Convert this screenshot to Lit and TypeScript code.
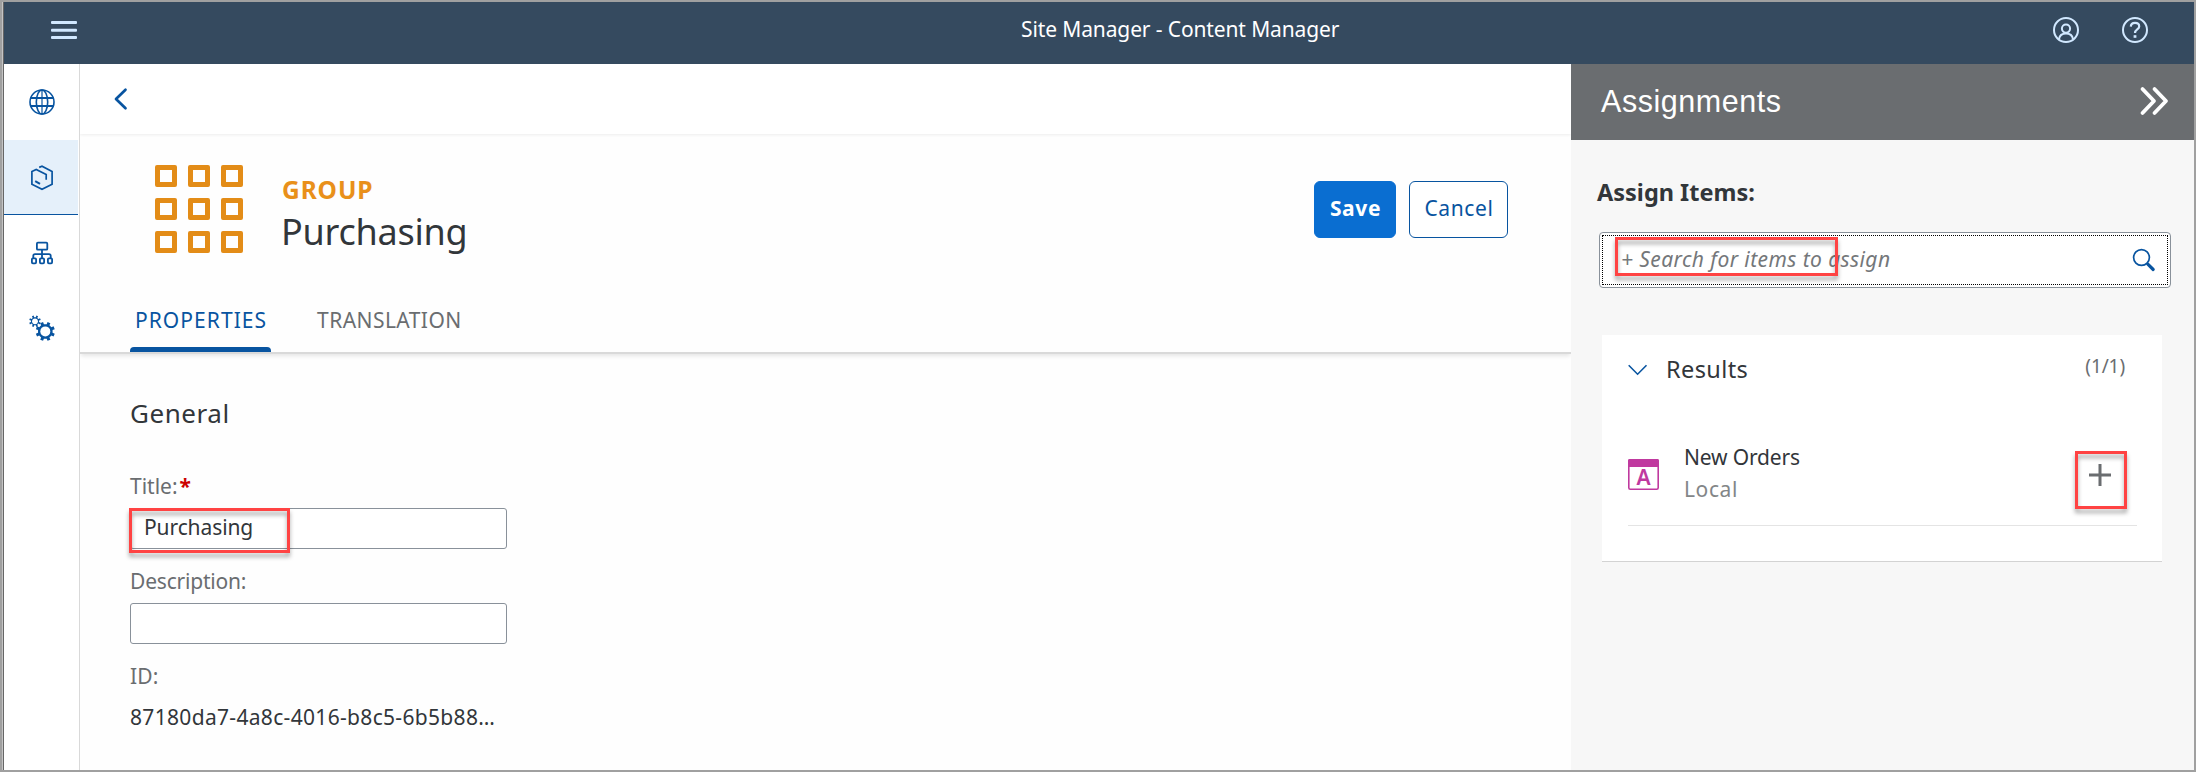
import { LitElement, html, css, svg } from "lit";
import { customElement, property, state } from "lit/decorators.js";
import { classMap } from "lit/directives/class-map.js";

/** Outline of a toothed wheel centred on (cx, cy). */
function gear(cx: number, cy: number, outer: number, root: number, teeth = 8): string {
  const points: string[] = [];
  const step = (Math.PI * 2) / teeth;
  for (let i = 0; i < teeth; i++) {
    const mid = (i + 0.5) * step - Math.PI / 2;
    for (const [r, a] of [
      [root, -0.26],
      [outer, -0.2],
      [outer, 0.2],
      [root, 0.26],
    ]) {
      const angle = mid + a * step;
      points.push(`${(cx + r * Math.cos(angle)).toFixed(2)},${(cy + r * Math.sin(angle)).toFixed(2)}`);
    }
  }
  return points.join(" ");
}

const icons = {
  menu: svg`<svg width="26" height="18" viewBox="0 0 26 18" fill="#d1e8ff">
    <rect width="26" height="3" rx="1"/><rect y="7.7" width="26" height="3" rx="1"/><rect y="15" width="26" height="3" rx="1"/></svg>`,
  user: svg`<svg width="26" height="26" viewBox="0 0 26 26" fill="none" stroke="#d1e8ff" stroke-width="2">
    <circle cx="13" cy="13" r="12"/><circle cx="13" cy="11.6" r="4.1"/>
    <path d="M6 22.2c.6-4 3.3-5.6 7-5.6s6.4 1.6 7 5.6"/></svg>`,
  help: svg`<svg width="26" height="26" viewBox="0 0 26 26" fill="none" stroke="#d1e8ff" stroke-width="2">
    <circle cx="13" cy="13" r="12"/>
    <path stroke-width="2.2" d="M8.800 9.600c.1-2.400 1.800-3.700 4.200-3.700s4.200 1.300 4.200 3.500c0 3.100-4.200 3-4.200 6.600"/>
    <rect x="11.6" y="18.2" width="2.8" height="2.6" fill="#d1e8ff" stroke="none"/></svg>`,
  globe: svg`<svg width="26" height="26" viewBox="0 0 26 26" fill="none" stroke="#0854a0" stroke-width="1.6">
    <circle cx="13" cy="13" r="12"/><ellipse cx="13" cy="13" rx="5.7" ry="12"/>
    <path stroke-width="1.9" d="M1.500 9h23M1.500 17h23"/><path stroke-width="1.2" d="M13 1v24"/></svg>`,
  content: svg`<svg width="26" height="26" viewBox="0 0 26 26" fill="none" stroke="#0854a0" stroke-width="1.7">
    <path d="M10.200 2.400 13 1.300l10.100 5.300v12.600L13 24.300 2.900 19.200V6.600L7.200 4.500l10 5v5.300"/>
    <path stroke-width="2" d="M6.200 16.200 11 18.900"/></svg>`,
  tree: svg`<svg width="24" height="24" viewBox="0 0 24 24" fill="none" stroke="#0854a0" stroke-width="1.8">
    <rect x="6.9" y="1.7" width="10.4" height="7" rx="1"/>
    <path d="M12 8.800V17M3.300 17v-2.200q0-1.700 1.700-1.700h14q1.700 0 1.700 1.700V17"/>
    <rect x="1.9" y="17.3" width="4.2" height="5" rx="1"/><rect x="9.9" y="17.3" width="4.2" height="5" rx="1"/><rect x="17.9" y="17.3" width="4.2" height="5" rx="1"/></svg>`,
  gears: svg`<svg width="26" height="28" viewBox="0 0 26 28" fill="#0854a0">
    <polygon points="${gear(6, 6.3, 5.9, 4.1)}"/><circle cx="6" cy="6.3" r="2.9" fill="#fff"/>
    <polygon points="${gear(16.3, 16.4, 9.7, 7.4)}"/><circle cx="16.3" cy="16.4" r="5" fill="#fff"/></svg>`,
  back: svg`<svg width="14" height="24" viewBox="0 0 14 24" fill="none" stroke="#0854a0" stroke-width="2.7" stroke-linecap="round" stroke-linejoin="round"><path d="M11.500 2.700 2 12 11.500 21.300"/></svg>`,
  forward: svg`<svg width="30" height="30" viewBox="0 0 30 30" fill="none" stroke="#fff" stroke-width="3.8" stroke-linecap="round" stroke-linejoin="round"><path d="M3.500 3 15 15 3.500 27M15.500 3 27 15 15.500 27"/></svg>`,
  search: svg`<svg width="24" height="24" viewBox="0 0 24 24" fill="none" stroke="#0854a0"><circle cx="9.5" cy="9.5" r="7.9" stroke-width="1.7"/><path stroke-width="3.2" stroke-linecap="round" d="M15.800 16.200 21.200 21.500"/></svg>`,
  down: svg`<svg width="20" height="12" viewBox="0 0 20 12" fill="none" stroke="#0854a0" stroke-width="1.6"><path d="M.7 1.300 9.600 10.200 18.500 1.300"/></svg>`,
  plus: svg`<svg width="24" height="24" viewBox="0 0 24 24" fill="none" stroke="#6a6d70" stroke-width="3"><path d="M1 12h22M12 1v22"/></svg>`,
  app: svg`<svg width="31" height="31" viewBox="0 0 31 31"><rect x=".8" y=".8" width="29.4" height="29.4" rx="1.5" fill="#fff" stroke="#c0399f" stroke-width="1.6"/>
    <rect width="31" height="8" rx="1.5" fill="#c0399f"/>
    <text x="15.5" y="26" text-anchor="middle" font-family="Noto Sans, sans-serif" font-size="21" font-weight="600" fill="#c0399f">A</text></svg>`,
};

@customElement("shell-bar")
class ShellBar extends LitElement {
  static styles = css`
    :host { display: grid; grid-template-columns: 970px 1fr auto; align-items: center; height: 62px; padding: 0 46px 0 47px; box-sizing: border-box; background: #354a5f; color: #fff; }
    svg { display: block; }
    .title { font-size: 21px; letter-spacing: -0.12px; line-height: 30px; padding-bottom: 8px; }
    .menu { padding-bottom: 6px; }
    .actions { display: flex; gap: 43px; justify-content: flex-end; padding-bottom: 6px; }
  `;
  @property() heading = "";
  render() {
    return html`<div class="menu">${icons.menu}</div>
      <div class="title">${this.heading}</div>
      <div class="actions">${icons.user}${icons.help}</div>`;
  }
}

@customElement("side-nav")
class SideNav extends LitElement {
  static styles = css`
    :host { display: block; width: 76px; box-sizing: border-box; border-right: 1px solid #d9d9d9; background: #fff; }
    .item { display: flex; align-items: center; justify-content: center; height: 76px; width: 74px; box-sizing: border-box; padding-left: 2px; }
    .item.selected { height: 75px; background: #e5f0fa; border-bottom: 1px solid #0854a0; padding-top: 1px; }
    svg { display: block; }
  `;
  @state() selected = 1;
  render() {
    return [icons.globe, icons.content, icons.tree, icons.gears].map(
      (icon, i) => html`<div class=${classMap({ item: true, selected: i === this.selected })} @click=${() => (this.selected = i)}>${icon}</div>`,
    );
  }
}

@customElement("group-editor")
class GroupEditor extends LitElement {
  static styles = css`
    :host { display: block; background: #fefefe; color: #32363a; font-size: 21px; }
    svg { display: block; }
    .back { height: 70px; box-sizing: border-box; padding: 23px 0 0 34px; box-shadow: 0 1px 3px rgba(0, 0, 0, 0.07); clip-path: inset(0 0 -5px 0); background: #fff; }
    .head { height: 220px; box-sizing: border-box; border-bottom: 2px solid #d9d9d9; box-shadow: 0 3px 4px -1px rgba(0, 0, 0, 0.1); display: flex; flex-direction: column; clip-path: inset(0 0 -8px 0); }
    .summary { display: flex; height: 150px; padding: 31px 63px 0 75px; box-sizing: border-box; }
    .tiles { display: grid; grid-template-columns: repeat(3, 22px); grid-auto-rows: 22px; gap: 11px; }
    .tile { border: 5.5px solid #e38c17; border-radius: 2px; box-sizing: border-box; }
    .names { flex: 1; padding-left: 39px; }
    .kind { color: #e9901a; font-size: 24.5px; font-weight: 700; letter-spacing: 0.9px; line-height: 32px; padding-top: 9px; }
    .name { font-size: 36px; letter-spacing: -0.25px; line-height: 52px; margin: 0 0 0 -1px; }
    .buttons { display: flex; gap: 13px; padding-top: 16px; }
    .button { height: 57px; box-sizing: border-box; border-radius: 6px; border: 1px solid #0854a0; color: #0854a0; letter-spacing: 0.6px; text-align: center; line-height: 53px; width: 99px; padding-left: 1px; background: #fff; }
    .button.primary { width: 82px; background: #0a6ed1; border-color: #0a6ed1; color: #fff; font-weight: 700; }
    .tabs { display: flex; flex: 1; padding-left: 50px; gap: 41px; }
    .tab { padding: 22px 5px 0 5px; height: 70px; box-sizing: border-box; line-height: 32px; color: #6a6d70; letter-spacing: 0.45px; position: relative; }
    .tab.current { color: #0854a0; letter-spacing: 1.05px; width: 141px; }
    .tab.current::after { content: ""; position: absolute; left: 0; bottom: 0; width: 141px; height: 5px; border-radius: 4px 4px 0 0; background: #0854a0; }
    .form { padding: 39px 0 0 50px; width: 377px; }
    h2 { margin: 0 0 33px; font-size: 26px; font-weight: 400; letter-spacing: 0.55px; line-height: 40px; }
    label { display: block; line-height: 40px; height: 42px; color: #6a6d70; }
    .desc { letter-spacing: -0.2px; }
    .id { letter-spacing: 0.2px; }
    .required { color: #c00; font-weight: 700; padding-left: 2px; }
    .field { position: relative; height: 41px; box-sizing: border-box; border: 1px solid #89919a; border-radius: 3px; background: #fff; line-height: 36px; letter-spacing: -0.1px; padding-left: 13px; margin-bottom: 12px; }
    .mark { position: absolute; left: -2px; top: -1px; width: 161px; height: 45px; box-sizing: border-box; border: 3px solid #ff4343; filter: drop-shadow(0 4px 2px rgba(0, 0, 0, 0.35)); }
    .value { line-height: 38px; letter-spacing: 0.32px; white-space: nowrap; }
  `;
  @state() tab = 0;
  render() {
    return html`
      <div class="back">${icons.back}</div>
      <div class="head">
        <div class="summary">
          <div class="tiles">${Array.from({ length: 9 }, () => html`<div class="tile"></div>`)}</div>
          <div class="names"><div class="kind">GROUP</div><div class="name">Purchasing</div></div>
          <div class="buttons"><div class="button primary">Save</div><div class="button">Cancel</div></div>
        </div>
        <div class="tabs">
          ${["PROPERTIES", "TRANSLATION"].map(
            (name, i) => html`<div class=${classMap({ tab: true, current: i === this.tab })}>${name}</div>`,
          )}
        </div>
      </div>
      <div class="form">
        <h2>General</h2>
        <label>Title:<span class="required">*</span></label>
        <div class="field">Purchasing<div class="mark"></div></div>
        <label class="desc">Description:</label>
        <div class="field"></div>
        <label class="id">ID:</label>
        <div class="value">87180da7-4a8c-4016-b8c5-6b5b88…</div>
      </div>`;
  }
}

@customElement("assignment-panel")
class AssignmentPanel extends LitElement {
  static styles = css`
    :host { display: block; background: #f7f7f7; color: #32363a; font-size: 21px; }
    svg { display: block; }
    .bar { display: flex; align-items: center; justify-content: space-between; height: 76px; box-sizing: border-box; padding: 0 25px 2px 30px; background: #6a6d70; color: #fff; }
    .bar-title { font-family: "Liberation Sans", Arial, sans-serif; font-size: 30.5px; letter-spacing: 0.55px; line-height: 40px; padding-bottom: 1px; }
    .body { padding: 32px 23px 0 28px; }
    h3 { margin: 0 0 20px -2px; font-size: 23.5px; line-height: 40px; }
    .search { position: relative; height: 56px; box-sizing: border-box; border: 1px solid #89919a; border-radius: 4px; background: #fff; padding: 2px; }
    .focus { display: flex; justify-content: space-between; align-items: center; height: 50px; box-sizing: border-box; border: 1px dotted #000; padding: 0 11px 0 18px; }
    .hint { font-style: italic; color: #74777a; letter-spacing: 0.42px; line-height: 40px; padding-bottom: 2px; }
    .search-mark { position: absolute; left: 15px; top: 4px; width: 223px; height: 39px; box-sizing: border-box; border: 3px solid #ff4343; filter: drop-shadow(0 4px 2px rgba(0, 0, 0, 0.35)); }
    .card { margin: 47px 9px 0 3px; height: 227px; box-sizing: border-box; background: #fff; border-bottom: 1px solid #d3d3d3; padding: 14px 25px 0 26px; }
    .results { display: flex; align-items: center; height: 42px; }
    .results-title { font-size: 23.5px; letter-spacing: 0.4px; padding: 0 0 2px 18px; flex: 1; line-height: 40px; }
    .count { font-size: 19px; letter-spacing: -0.1px; color: #6a6d70; padding: 0 12px 9px 0; }
    .row { display: flex; align-items: center; height: 101px; margin-top: 34px; box-sizing: border-box; border-bottom: 1px solid #e4e4e4; padding-bottom: 1px; }
    .texts { flex: 1; padding: 0 0 3px 25px; line-height: 32px; }
    .name { letter-spacing: -0.15px; }
    .origin { color: #838688; letter-spacing: 0.6px; }
    .add { position: relative; margin-right: 25px; }
    .add-mark { position: absolute; left: -13px; top: -12px; width: 52px; height: 58px; box-sizing: border-box; border: 3px solid #ff4343; filter: drop-shadow(0 4px 2px rgba(0, 0, 0, 0.35)); }
  `;
  render() {
    return html`
      <div class="bar"><div class="bar-title">Assignments</div>${icons.forward}</div>
      <div class="body">
        <h3>Assign Items:</h3>
        <div class="search">
          <div class="focus"><span class="hint">+ Search for items to assign</span>${icons.search}</div>
          <div class="search-mark"></div>
        </div>
        <div class="card">
          <div class="results">${icons.down}<div class="results-title">Results</div><div class="count">(1/1)</div></div>
          <div class="row">
            ${icons.app}
            <div class="texts"><div class="name">New Orders</div><div class="origin">Local</div></div>
            <div class="add">${icons.plus}<div class="add-mark"></div></div>
          </div>
        </div>
      </div>`;
  }
}

@customElement("app-root")
class AppRoot extends LitElement {
  static styles = css`
    :host { display: block; box-sizing: border-box; width: 2196px; height: 772px; overflow: hidden; border: 2px solid #a0a0a0; font-family: "Noto Sans", "Open Sans", sans-serif; }
    .window { height: 768px; box-sizing: border-box; border-left: 1px solid #c4c4c4; }
    .inner { height: 768px; box-sizing: border-box; border-left: 1px solid #666; }
    .columns { display: grid; grid-template-columns: 76px 1fr 623px; height: 706px; }
  `;
  render() {
    return html`<div class="window"><div class="inner">
      <shell-bar heading="Site Manager - Content Manager"></shell-bar>
      <div class="columns"><side-nav></side-nav><group-editor></group-editor><assignment-panel></assignment-panel></div>
    </div></div>`;
  }
}
